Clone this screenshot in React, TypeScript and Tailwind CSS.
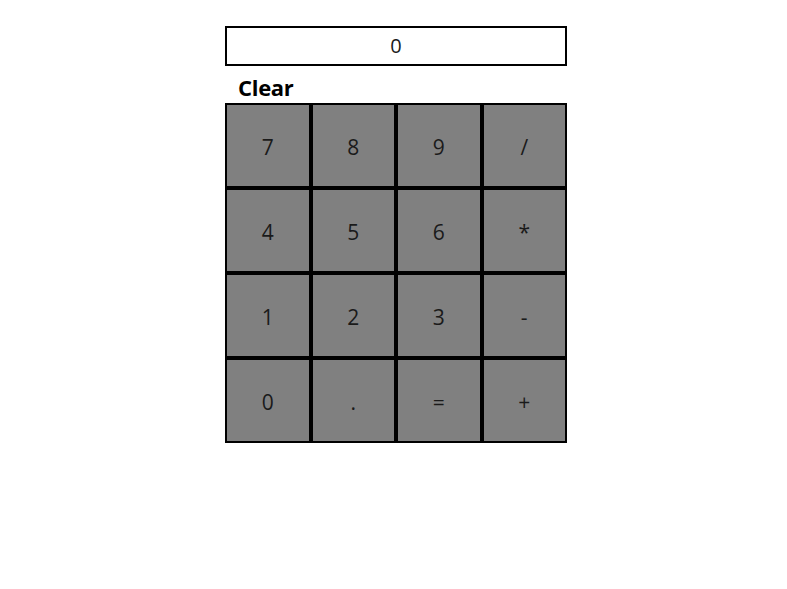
import { useState } from 'react'

const keys = ['7', '8', '9', '/', '4', '5', '6', '*', '1', '2', '3', '-', '0', '.', '=', '+']

export default function App() {
  const [display, setDisplay] = useState('0')

  const press = (k: string) => {
    if (k === '=') {
      try {
        // eslint-disable-next-line no-new-func
        const result = Function(`return (${display})`)()
        setDisplay(String(result))
      } catch {
        setDisplay('0')
      }
      return
    }
    setDisplay(display === '0' ? k : display + k)
  }

  return (
    <div
      className="min-h-[589px] bg-white flex justify-center pl-[5px] pt-[26px] text-[#1a1a1a]"
      style={{ fontFamily: '"Open Sans", "Noto Sans", sans-serif' }}>
      <div className="w-[342px] flex flex-col">
        <div className="h-[40px] border-2 border-black flex items-center justify-center text-[20px]">
          {display}
        </div>
        <button
          className="h-[37px] text-left pl-[13px] pt-[4px] font-bold text-[22px] text-black leading-none tracking-[-0.3px]"
          onClick={() => setDisplay('0')}>
          Clear
        </button>
        <div className="grid grid-cols-4">
          {keys.map(k => (
            <button
              key={k}
              className="h-[85px] border-2 border-black bg-[#808080] text-[21px] pt-[5px] flex items-center justify-center"
              onClick={() => press(k)}>
              {k}
            </button>
          ))}
        </div>
      </div>
    </div>
  )
}
